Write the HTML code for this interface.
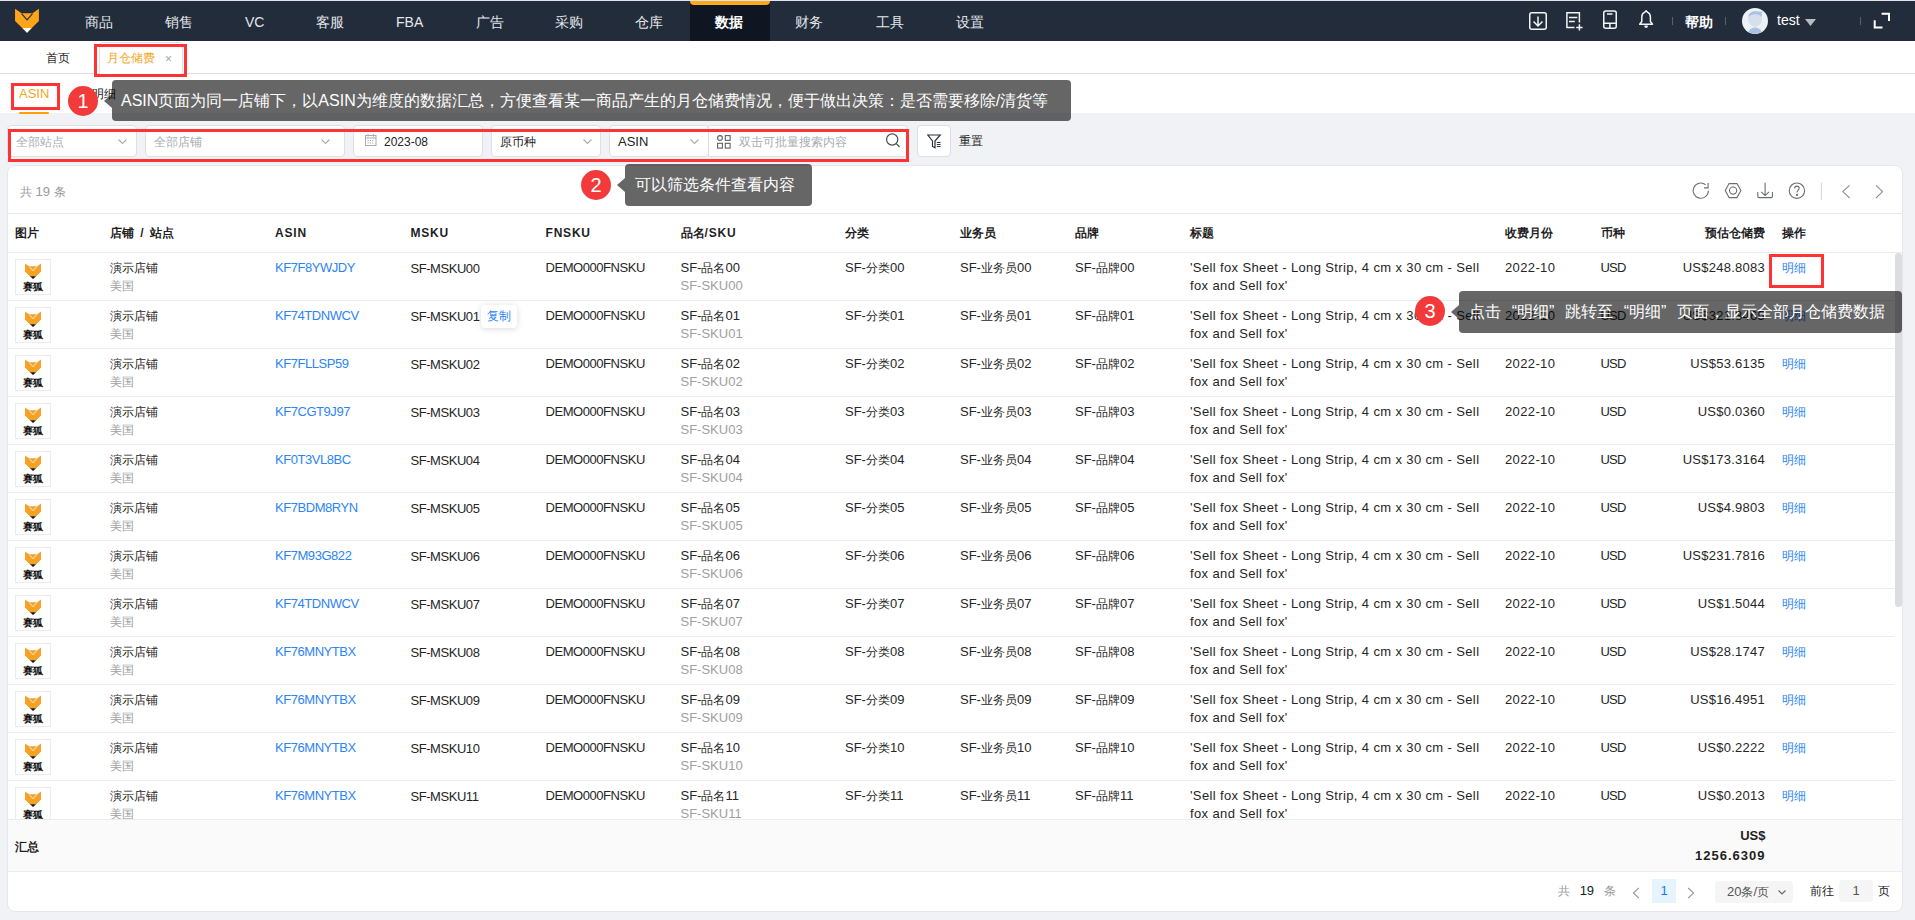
<!DOCTYPE html><html><head><meta charset="utf-8"><style>
*{box-sizing:border-box;margin:0;padding:0}
html,body{width:1915px;height:920px;overflow:hidden;background:#f1f2f6;font-family:"Liberation Sans",sans-serif;color:#1f1f1f}
i{font-style:normal}
.a{position:absolute;white-space:nowrap}
.z{font-size:12px;letter-spacing:0}
#hdr{position:absolute;left:0;top:1px;width:1915px;height:40px;background:#232c3b}
#topline{position:absolute;left:0;top:0;width:1915px;height:1px;background:#dfe3ea}
.nav{position:absolute;top:14px;font-size:14px;line-height:16px;color:#e4e7ec}
.nav .z{font-size:14px}
#act{position:absolute;left:690px;top:1px;width:80px;height:40px;background:#0f1621}
#actbar{position:absolute;left:690px;top:1px;width:80px;height:4px;background:#ffa81a;border-radius:0 0 4px 4px}
#tabs{position:absolute;left:0;top:41px;width:1915px;height:33px;background:#fff;border-bottom:1px solid #dcdfe6}
#sub{position:absolute;left:0;top:74px;width:1915px;height:39px;background:#fff}
.tip{z-index:6;position:absolute;background:rgba(0,0,0,.6);color:#fff;font-size:16px;line-height:20px;border-radius:4px;white-space:nowrap}
.tip .z{font-size:16px}
.tip:before{content:"";position:absolute;left:-8px;top:50%;margin-top:-7px;border-right:8px solid rgba(0,0,0,.6);border-top:7px solid transparent;border-bottom:7px solid transparent}
.badge{z-index:7;position:absolute;width:30px;height:30px;border-radius:50%;background:#f33a3a;color:#fff;font-size:20px;line-height:30px;text-align:center}
.rb{z-index:5;position:absolute;border:3px solid #ff3333}
.inp{position:absolute;top:125px;height:32px;background:#fff;border:1px solid #dcdfe6;border-radius:4px}
.ph{position:absolute;font-size:12px;line-height:14px;color:#a8abb2}
#card{position:absolute;left:7px;top:165px;width:1896px;height:747px;background:#fff;border:1px solid #e4e7ed;border-radius:8px;overflow:hidden}
.th{position:absolute;top:12px;font-weight:bold;font-size:12px;line-height:14px;color:#1f1f1f;letter-spacing:.8px}
.th .z{font-size:12px}
.ws{word-spacing:2px}
.row{position:absolute;left:0;width:1886px;height:48px;border-bottom:1px solid #ebeced}
.t1{position:absolute;top:6px;font-size:13px;line-height:18px;color:#262626}
.t2{position:absolute;top:24px;font-size:13px;line-height:18px;color:#a0a0a0}
.up{letter-spacing:-.45px}
.lo{letter-spacing:.37px}
.blue{color:#2d84f7}
.img{position:absolute;left:7px;top:6px;width:36px;height:36px;border:1px solid #ececec;background:#fff}
</style></head><body>
<div id="topline"></div><div id="hdr"></div><div id="act"></div><div id="actbar"></div>
<div class="a" style="left:12px;top:6px;line-height:0"><svg width="30" height="30" viewBox="12 6 30 30"><polygon points="15.05,8.83 21.5,13.35 32.6,13.35 38.9,8.83 38.9,21 27.05,32.8 15.05,21" fill="#ffa51b"/><polyline points="21.6,13.6 27.05,19.9 32.5,13.6" fill="none" stroke="#2a2f38" stroke-width="1.2"/><polygon points="22.5,28.1 31.6,28.1 27.05,32.8" fill="#fff"/></svg></div>
<div class="nav a" style="left:85px">商品</div>
<div class="nav a" style="left:164.5px">销售</div>
<div class="nav a" style="left:245px">VC</div>
<div class="nav a" style="left:316px">客服</div>
<div class="nav a" style="left:396px">FBA</div>
<div class="nav a" style="left:475.6px">广告</div>
<div class="nav a" style="left:555px">采购</div>
<div class="nav a" style="left:635px">仓库</div>
<div class="nav a" style="left:715px;color:#fff;font-weight:bold">数据</div>
<div class="nav a" style="left:795px">财务</div>
<div class="nav a" style="left:875.6px">工具</div>
<div class="nav a" style="left:955.8px">设置</div>
<svg class="a" style="left:1520px;top:4px" width="140" height="34" viewBox="1520 4 140 34" fill="none" stroke="#f2f4f7" stroke-width="1.5"><rect x="1529.75" y="12.75" width="16.5" height="16.5" rx="2"/><path d="M1538 16.5V25.5M1533.5 21.5L1538 26L1542.5 21.5"/><path d="M1574.5 27.6H1566.9V12.75H1579.4V22.5M1569 17.5H1577.3M1569 21.5H1574.8M1579.4 24.2V30.6M1576.2 27.4H1582.6"/><rect x="1603.75" y="10.9" width="12.5" height="17.3" rx="2"/><path d="M1607 13.9H1612.5M1603.75 23.3H1616.25M1609.9 23.3V28.2"/><path d="M1646.1 10.7L1644.5 12.4C1642.7 13.1 1641.8 14.9 1641.8 17.1V21.5L1639.7 24.3H1652.5L1650.4 21.5V17.1C1650.4 14.9 1649.5 13.1 1647.7 12.4Z" stroke-linejoin="round"/><path d="M1644.4 25.5H1647.8V26.6C1647.8 27.4 1647.1 27.9 1646.1 27.9C1645.1 27.9 1644.4 27.4 1644.4 26.6Z" fill="#f2f4f7" stroke="none"/></svg>
<div class="a" style="left:1672px;top:17px;width:1px;height:8px;background:#5a6270"></div>
<div class="a" style="left:1725px;top:17px;width:1px;height:8px;background:#5a6270"></div>
<div class="a" style="left:1860px;top:17px;width:1px;height:8px;background:#5a6270"></div>
<svg class="a" style="left:1742px;top:8px" width="26" height="26" viewBox="0 0 26 26"><circle cx="13" cy="13" r="13" fill="#eef1f6"/><ellipse cx="13" cy="11" rx="7" ry="7.5" fill="#d6dfeb"/><path d="M6 9C7 4.5 10 3.2 13.5 3.2C16 3.2 18.3 3.8 21 3.6L19.5 5.2C20 6.5 20.2 8 20 9C18 6.8 15 6.2 12 6.4C9.5 6.6 7.5 7.5 6 9Z" fill="#a9c3e4"/><path d="M6.5 23.5C8 20.5 10.3 19.5 13 19.5C15.7 19.5 18 20.5 19.5 23.5C17.8 25 15.5 25.8 13 25.8C10.5 25.8 8.2 25 6.5 23.5Z" fill="#a9c1e2"/><rect x="11.5" y="17" width="3" height="3" fill="#d6dfeb"/></svg>
<svg class="a" style="left:1805px;top:19px" width="11" height="7" viewBox="0 0 11 7"><path d="M0 0H11L5.5 7Z" fill="#b8bcc4"/></svg>
<svg class="a" style="left:1872px;top:12px" width="20" height="18" viewBox="1872 12 20 18" fill="none" stroke="#fff" stroke-width="2"><path d="M1881.6 13.8H1889V21.1M1874.7 20.3V27.6H1882.5"/></svg>
<div class="nav a" style="left:1685px;color:#fff;font-weight:bold">帮助</div>
<div class="nav a" style="left:1777px;top:12px;color:#fff">test</div>
<div id="tabs"></div>
<div class="a" style="left:46px;top:51px;font-size:12px;line-height:14px;color:#222">首页</div>
<div class="a" style="left:99px;top:42px;width:84px;height:32px;border:1px solid #dcdfe6;border-bottom:none;border-radius:4px 4px 0 0;background:#fff"></div>
<div class="a" style="left:107px;top:51px;font-size:12px;line-height:14px;color:#f5a623">月仓储费</div>
<div class="a" style="left:165px;top:52px;font-size:12px;line-height:14px;color:#9aa">×</div>
<div class="rb" style="left:94px;top:44px;width:93px;height:33px"></div>
<div id="sub"></div>
<div class="a" style="left:19px;top:87px;font-size:13px;line-height:14px;color:#f5a623">ASIN</div>
<div class="a" style="left:19px;top:112px;width:30px;height:2px;background:#ffa000;border-radius:1px"></div>
<div class="a" style="left:92px;top:87px;font-size:12px;line-height:14px;color:#222">明细</div>
<div class="rb" style="left:11px;top:83px;width:49px;height:27px"></div>
<div class="tip" style="left:112px;top:80px;width:959px;height:41px;padding:11px 0 0 9px">ASIN<i class="z">页面为同一店铺下，以</i>ASIN<i class="z">为维度的数据汇总，方便查看某一商品产生的月仓储费情况，便于做出决策：是否需要移除</i>/<i class="z">清货等</i></div>
<div class="badge" style="left:68px;top:86px">1</div>
<div class="inp" style="left:7px;width:130px"></div>
<div class="inp" style="left:145px;width:200px"></div>
<div class="inp" style="left:353px;width:130px"></div>
<div class="inp" style="left:491px;width:110px"></div>
<div class="inp" style="left:609px;width:100px"></div>
<div class="ph a" style="left:16px;top:135px">全部站点</div>
<div class="ph a" style="left:154px;top:135px">全部店铺</div>
<div class="a" style="left:384px;top:135px;font-size:12px;line-height:14px;color:#222">2023-08</div>
<div class="a" style="left:500px;top:135px;font-size:12px;line-height:14px;color:#222">原币种</div>
<div class="a" style="left:618px;top:135px;font-size:13px;line-height:14px;color:#222">ASIN</div>
<div class="inp" style="left:708px;width:200px;border-radius:0 4px 4px 0"></div>
<div class="ph a" style="left:739px;top:135px">双击可批量搜索内容</div>
<div class="inp" style="left:917px;width:34px"></div>
<div class="a" style="left:959px;top:134px;font-size:12px;line-height:14px;color:#222">重置</div>
<svg class="a" style="left:117.5px;top:138.5px" width="9" height="6" viewBox="0 0 9 6"><path d="M0.5 0.5L4.5 4.5L8.5 0.5" fill="none" stroke="#a8abb2" stroke-width="1.1"/></svg>
<svg class="a" style="left:321px;top:138.5px" width="9" height="6" viewBox="0 0 9 6"><path d="M0.5 0.5L4.5 4.5L8.5 0.5" fill="none" stroke="#a8abb2" stroke-width="1.1"/></svg>
<svg class="a" style="left:582.5px;top:138.5px" width="9" height="6" viewBox="0 0 9 6"><path d="M0.5 0.5L4.5 4.5L8.5 0.5" fill="none" stroke="#a8abb2" stroke-width="1.1"/></svg>
<svg class="a" style="left:689.5px;top:138.5px" width="9" height="6" viewBox="0 0 9 6"><path d="M0.5 0.5L4.5 4.5L8.5 0.5" fill="none" stroke="#a8abb2" stroke-width="1.1"/></svg>
<svg class="a" style="left:365px;top:134px" width="12" height="12" viewBox="0 0 12 12" fill="none" stroke="#a8abb2" stroke-width="1"><rect x="0.5" y="1.5" width="10.5" height="10" /><path d="M0.5 4H11M3 0V2.5M8.5 0V2.5" /><path d="M2.5 6.5H9M2.5 9H9" stroke-dasharray="1.2 1.1"/></svg>
<svg class="a" style="left:717px;top:134.5px" width="14" height="14" viewBox="0 0 14 14" fill="none" stroke="#5c5f66" stroke-width="1.1"><circle cx="3" cy="3" r="2.4"/><rect x="8.3" y="0.6" width="4.8" height="4.8"/><rect x="0.6" y="8.3" width="4.8" height="4.8"/><rect x="8.3" y="8.3" width="4.8" height="4.8"/></svg>
<svg class="a" style="left:885px;top:133px" width="16" height="15" viewBox="0 0 16 15" fill="none" stroke="#4a4d55" stroke-width="1.2"><circle cx="7.2" cy="6.5" r="5.6"/><path d="M11.3 10.6L14.6 14"/></svg>
<svg class="a" style="left:927px;top:133.5px" width="15" height="15" viewBox="0 0 15 15" fill="none" stroke="#303339" stroke-width="1.2"><path d="M0.8 1H13.2L8 7V13.8L5.5 12.5V7Z"/><path d="M9.8 8.5H13.5M9.8 10.5H13.5M9.8 12.5H13.5" stroke-width="1"/></svg>
<div class="rb" style="left:8px;top:129px;width:901px;height:33px"></div>
<div id="card">
<div class="a" style="left:0;top:0;width:1896px;height:48px;border-bottom:1px solid #e4e7ed"></div>
<div class="a" style="left:12px;top:19px;font-size:13px;line-height:14px;color:#999"><i class="z">共</i> 19 <i class="z">条</i></div>
<svg class="a" style="left:1675px;top:9px" width="220" height="30" viewBox="1683 175 220 30" fill="none" stroke="#6b6e75" stroke-width="1.1"><path d="M1708.4 190.7A7.6 7.6 0 1 1 1705.6 184.8"/><path d="M1704 187.9H1708.1V183.1"/><path d="M1729.1 183.6H1737L1740.9 190.6L1737 197.6H1729.1L1725.2 190.6Z"/><circle cx="1733.1" cy="190.6" r="3.6"/><path d="M1757.8 192V196.6Q1757.8 197.6 1758.8 197.6H1771.4Q1772.4 197.6 1772.4 196.6V192M1765.1 182.8V195.4M1761.2 191.8L1765.1 195.6L1769 191.8"/><circle cx="1796.9" cy="190.7" r="7.7"/><path d="M1794.6 188.4C1794.6 186.9 1795.6 186.1 1796.9 186.1C1798.2 186.1 1799.2 187 1799.2 188.3C1799.2 190.1 1797 190.3 1797 192.6"/><circle cx="1797" cy="194.9" r=".5" fill="#6b6e75"/><path d="M1821.5 182.5V199.7" stroke="#d9d9d9"/><path d="M1849.6 185.3L1842.8 191.6L1849.6 198M1876 185.3L1882.6 191.6L1876 198" stroke="#8c8f96"/></svg>
<div class="a" style="left:0;top:48px;width:1896px;height:39px;border-bottom:1px solid #ebeced">
<div class="th a ws" style="left:7px"><i class="z">图片</i></div>
<div class="th a ws" style="left:102px"><i class="z">店铺</i> / <i class="z">站点</i></div>
<div class="th a ws" style="left:267px">ASIN</div>
<div class="th a ws" style="left:402.5px">MSKU</div>
<div class="th a ws" style="left:537.5px">FNSKU</div>
<div class="th a ws" style="left:672.5px"><i class="z">品名</i>/SKU</div>
<div class="th a ws" style="left:837px"><i class="z">分类</i></div>
<div class="th a ws" style="left:952px"><i class="z">业务员</i></div>
<div class="th a ws" style="left:1067px"><i class="z">品牌</i></div>
<div class="th a ws" style="left:1182px"><i class="z">标题</i></div>
<div class="th a ws" style="left:1497px"><i class="z">收费月份</i></div>
<div class="th a ws" style="left:1592.5px"><i class="z">币种</i></div>
<div class="th a ws" style="left:1697px"><i class="z">预估仓储费</i></div>
<div class="th a ws" style="left:1774px"><i class="z">操作</i></div>
</div>
<div class="a" style="left:0;top:87px;width:1896px;height:566px;overflow:hidden">
<div class="row" style="top:0px">
<div class="img"><svg class="a" style="left:0;top:0" width="34" height="34" viewBox="16 260 34 34"><polygon points="25,263.5 29,266.25 37.25,266.25 41,263.5 41,271.5 36,276.5 30,276.5 25,271.5" fill="#f3a127"/><polyline points="29.3,266.6 33,270.7 36.9,266.6" fill="none" stroke="#fff" stroke-width=".8"/><polygon points="30,276.3 36,276.3 33,279" fill="#111"/></svg><div class="a" style="left:7px;top:21px;font-size:10px;line-height:11px;font-weight:bold;color:#111;letter-spacing:-0.3px">赛狐</div></div>
<div class="t1 a" style="left:102px"><i class="z">演示店铺</i></div><div class="t2 a" style="left:102px"><i class="z">美国</i></div>
<div class="t1 a blue up" style="left:267px">KF7F8YWJDY</div>
<div class="t1 a up" style="left:402.5px;top:7px">SF-MSKU00</div>
<div class="t1 a up" style="left:537.5px">DEMO000FNSKU</div>
<div class="t1 a" style="left:672.5px">SF-<i class="z">品名</i>00</div><div class="t2 a" style="left:672.5px">SF-SKU00</div>
<div class="t1 a" style="left:837px">SF-<i class="z">分类</i>00</div>
<div class="t1 a" style="left:952px">SF-<i class="z">业务员</i>00</div>
<div class="t1 a" style="left:1067px">SF-<i class="z">品牌</i>00</div>
<div class="t1 a lo" style="left:1182px">'Sell fox Sheet - Long Strip, 4 cm x 30 cm - Sell</div><div class="t2 a lo" style="left:1182px;color:#262626">fox and Sell fox'</div>
<div class="t1 a lo" style="left:1497px">2022-10</div>
<div class="t1 a" style="left:1592.5px;letter-spacing:-.8px">USD</div>
<div class="t1 a" style="right:129px;text-align:right;letter-spacing:.25px">US$248.8083</div>
<div class="t1 a blue" style="left:1774px"><i class="z">明细</i></div>
</div>
<div class="row" style="top:48px">
<div class="img"><svg class="a" style="left:0;top:0" width="34" height="34" viewBox="16 260 34 34"><polygon points="25,263.5 29,266.25 37.25,266.25 41,263.5 41,271.5 36,276.5 30,276.5 25,271.5" fill="#f3a127"/><polyline points="29.3,266.6 33,270.7 36.9,266.6" fill="none" stroke="#fff" stroke-width=".8"/><polygon points="30,276.3 36,276.3 33,279" fill="#111"/></svg><div class="a" style="left:7px;top:21px;font-size:10px;line-height:11px;font-weight:bold;color:#111;letter-spacing:-0.3px">赛狐</div></div>
<div class="t1 a" style="left:102px"><i class="z">演示店铺</i></div><div class="t2 a" style="left:102px"><i class="z">美国</i></div>
<div class="t1 a blue up" style="left:267px">KF74TDNWCV</div>
<div class="t1 a up" style="left:402.5px;top:7px">SF-MSKU01</div>
<div class="a" style="left:473px;top:4px;width:36px;height:23px;background:#fff;border-radius:4px;box-shadow:0 1px 6px rgba(0,0,0,.15);color:#2d84f7;font-size:12px;line-height:23px;text-align:center">复制</div>
<div class="t1 a up" style="left:537.5px">DEMO000FNSKU</div>
<div class="t1 a" style="left:672.5px">SF-<i class="z">品名</i>01</div><div class="t2 a" style="left:672.5px">SF-SKU01</div>
<div class="t1 a" style="left:837px">SF-<i class="z">分类</i>01</div>
<div class="t1 a" style="left:952px">SF-<i class="z">业务员</i>01</div>
<div class="t1 a" style="left:1067px">SF-<i class="z">品牌</i>01</div>
<div class="t1 a lo" style="left:1182px">'Sell fox Sheet - Long Strip, 4 cm x 30 cm - Sell</div><div class="t2 a lo" style="left:1182px;color:#262626">fox and Sell fox'</div>
<div class="t1 a lo" style="left:1497px">2022-10</div>
<div class="t1 a" style="left:1592.5px;letter-spacing:-.8px">USD</div>
<div class="t1 a" style="right:129px;text-align:right;letter-spacing:.25px">US$321.3465</div>
<div class="t1 a blue" style="left:1774px"><i class="z">明细</i></div>
</div>
<div class="row" style="top:96px">
<div class="img"><svg class="a" style="left:0;top:0" width="34" height="34" viewBox="16 260 34 34"><polygon points="25,263.5 29,266.25 37.25,266.25 41,263.5 41,271.5 36,276.5 30,276.5 25,271.5" fill="#f3a127"/><polyline points="29.3,266.6 33,270.7 36.9,266.6" fill="none" stroke="#fff" stroke-width=".8"/><polygon points="30,276.3 36,276.3 33,279" fill="#111"/></svg><div class="a" style="left:7px;top:21px;font-size:10px;line-height:11px;font-weight:bold;color:#111;letter-spacing:-0.3px">赛狐</div></div>
<div class="t1 a" style="left:102px"><i class="z">演示店铺</i></div><div class="t2 a" style="left:102px"><i class="z">美国</i></div>
<div class="t1 a blue up" style="left:267px">KF7FLLSP59</div>
<div class="t1 a up" style="left:402.5px;top:7px">SF-MSKU02</div>
<div class="t1 a up" style="left:537.5px">DEMO000FNSKU</div>
<div class="t1 a" style="left:672.5px">SF-<i class="z">品名</i>02</div><div class="t2 a" style="left:672.5px">SF-SKU02</div>
<div class="t1 a" style="left:837px">SF-<i class="z">分类</i>02</div>
<div class="t1 a" style="left:952px">SF-<i class="z">业务员</i>02</div>
<div class="t1 a" style="left:1067px">SF-<i class="z">品牌</i>02</div>
<div class="t1 a lo" style="left:1182px">'Sell fox Sheet - Long Strip, 4 cm x 30 cm - Sell</div><div class="t2 a lo" style="left:1182px;color:#262626">fox and Sell fox'</div>
<div class="t1 a lo" style="left:1497px">2022-10</div>
<div class="t1 a" style="left:1592.5px;letter-spacing:-.8px">USD</div>
<div class="t1 a" style="right:129px;text-align:right;letter-spacing:.25px">US$53.6135</div>
<div class="t1 a blue" style="left:1774px"><i class="z">明细</i></div>
</div>
<div class="row" style="top:144px">
<div class="img"><svg class="a" style="left:0;top:0" width="34" height="34" viewBox="16 260 34 34"><polygon points="25,263.5 29,266.25 37.25,266.25 41,263.5 41,271.5 36,276.5 30,276.5 25,271.5" fill="#f3a127"/><polyline points="29.3,266.6 33,270.7 36.9,266.6" fill="none" stroke="#fff" stroke-width=".8"/><polygon points="30,276.3 36,276.3 33,279" fill="#111"/></svg><div class="a" style="left:7px;top:21px;font-size:10px;line-height:11px;font-weight:bold;color:#111;letter-spacing:-0.3px">赛狐</div></div>
<div class="t1 a" style="left:102px"><i class="z">演示店铺</i></div><div class="t2 a" style="left:102px"><i class="z">美国</i></div>
<div class="t1 a blue up" style="left:267px">KF7CGT9J97</div>
<div class="t1 a up" style="left:402.5px;top:7px">SF-MSKU03</div>
<div class="t1 a up" style="left:537.5px">DEMO000FNSKU</div>
<div class="t1 a" style="left:672.5px">SF-<i class="z">品名</i>03</div><div class="t2 a" style="left:672.5px">SF-SKU03</div>
<div class="t1 a" style="left:837px">SF-<i class="z">分类</i>03</div>
<div class="t1 a" style="left:952px">SF-<i class="z">业务员</i>03</div>
<div class="t1 a" style="left:1067px">SF-<i class="z">品牌</i>03</div>
<div class="t1 a lo" style="left:1182px">'Sell fox Sheet - Long Strip, 4 cm x 30 cm - Sell</div><div class="t2 a lo" style="left:1182px;color:#262626">fox and Sell fox'</div>
<div class="t1 a lo" style="left:1497px">2022-10</div>
<div class="t1 a" style="left:1592.5px;letter-spacing:-.8px">USD</div>
<div class="t1 a" style="right:129px;text-align:right;letter-spacing:.25px">US$0.0360</div>
<div class="t1 a blue" style="left:1774px"><i class="z">明细</i></div>
</div>
<div class="row" style="top:192px">
<div class="img"><svg class="a" style="left:0;top:0" width="34" height="34" viewBox="16 260 34 34"><polygon points="25,263.5 29,266.25 37.25,266.25 41,263.5 41,271.5 36,276.5 30,276.5 25,271.5" fill="#f3a127"/><polyline points="29.3,266.6 33,270.7 36.9,266.6" fill="none" stroke="#fff" stroke-width=".8"/><polygon points="30,276.3 36,276.3 33,279" fill="#111"/></svg><div class="a" style="left:7px;top:21px;font-size:10px;line-height:11px;font-weight:bold;color:#111;letter-spacing:-0.3px">赛狐</div></div>
<div class="t1 a" style="left:102px"><i class="z">演示店铺</i></div><div class="t2 a" style="left:102px"><i class="z">美国</i></div>
<div class="t1 a blue up" style="left:267px">KF0T3VL8BC</div>
<div class="t1 a up" style="left:402.5px;top:7px">SF-MSKU04</div>
<div class="t1 a up" style="left:537.5px">DEMO000FNSKU</div>
<div class="t1 a" style="left:672.5px">SF-<i class="z">品名</i>04</div><div class="t2 a" style="left:672.5px">SF-SKU04</div>
<div class="t1 a" style="left:837px">SF-<i class="z">分类</i>04</div>
<div class="t1 a" style="left:952px">SF-<i class="z">业务员</i>04</div>
<div class="t1 a" style="left:1067px">SF-<i class="z">品牌</i>04</div>
<div class="t1 a lo" style="left:1182px">'Sell fox Sheet - Long Strip, 4 cm x 30 cm - Sell</div><div class="t2 a lo" style="left:1182px;color:#262626">fox and Sell fox'</div>
<div class="t1 a lo" style="left:1497px">2022-10</div>
<div class="t1 a" style="left:1592.5px;letter-spacing:-.8px">USD</div>
<div class="t1 a" style="right:129px;text-align:right;letter-spacing:.25px">US$173.3164</div>
<div class="t1 a blue" style="left:1774px"><i class="z">明细</i></div>
</div>
<div class="row" style="top:240px">
<div class="img"><svg class="a" style="left:0;top:0" width="34" height="34" viewBox="16 260 34 34"><polygon points="25,263.5 29,266.25 37.25,266.25 41,263.5 41,271.5 36,276.5 30,276.5 25,271.5" fill="#f3a127"/><polyline points="29.3,266.6 33,270.7 36.9,266.6" fill="none" stroke="#fff" stroke-width=".8"/><polygon points="30,276.3 36,276.3 33,279" fill="#111"/></svg><div class="a" style="left:7px;top:21px;font-size:10px;line-height:11px;font-weight:bold;color:#111;letter-spacing:-0.3px">赛狐</div></div>
<div class="t1 a" style="left:102px"><i class="z">演示店铺</i></div><div class="t2 a" style="left:102px"><i class="z">美国</i></div>
<div class="t1 a blue up" style="left:267px">KF7BDM8RYN</div>
<div class="t1 a up" style="left:402.5px;top:7px">SF-MSKU05</div>
<div class="t1 a up" style="left:537.5px">DEMO000FNSKU</div>
<div class="t1 a" style="left:672.5px">SF-<i class="z">品名</i>05</div><div class="t2 a" style="left:672.5px">SF-SKU05</div>
<div class="t1 a" style="left:837px">SF-<i class="z">分类</i>05</div>
<div class="t1 a" style="left:952px">SF-<i class="z">业务员</i>05</div>
<div class="t1 a" style="left:1067px">SF-<i class="z">品牌</i>05</div>
<div class="t1 a lo" style="left:1182px">'Sell fox Sheet - Long Strip, 4 cm x 30 cm - Sell</div><div class="t2 a lo" style="left:1182px;color:#262626">fox and Sell fox'</div>
<div class="t1 a lo" style="left:1497px">2022-10</div>
<div class="t1 a" style="left:1592.5px;letter-spacing:-.8px">USD</div>
<div class="t1 a" style="right:129px;text-align:right;letter-spacing:.25px">US$4.9803</div>
<div class="t1 a blue" style="left:1774px"><i class="z">明细</i></div>
</div>
<div class="row" style="top:288px">
<div class="img"><svg class="a" style="left:0;top:0" width="34" height="34" viewBox="16 260 34 34"><polygon points="25,263.5 29,266.25 37.25,266.25 41,263.5 41,271.5 36,276.5 30,276.5 25,271.5" fill="#f3a127"/><polyline points="29.3,266.6 33,270.7 36.9,266.6" fill="none" stroke="#fff" stroke-width=".8"/><polygon points="30,276.3 36,276.3 33,279" fill="#111"/></svg><div class="a" style="left:7px;top:21px;font-size:10px;line-height:11px;font-weight:bold;color:#111;letter-spacing:-0.3px">赛狐</div></div>
<div class="t1 a" style="left:102px"><i class="z">演示店铺</i></div><div class="t2 a" style="left:102px"><i class="z">美国</i></div>
<div class="t1 a blue up" style="left:267px">KF7M93G822</div>
<div class="t1 a up" style="left:402.5px;top:7px">SF-MSKU06</div>
<div class="t1 a up" style="left:537.5px">DEMO000FNSKU</div>
<div class="t1 a" style="left:672.5px">SF-<i class="z">品名</i>06</div><div class="t2 a" style="left:672.5px">SF-SKU06</div>
<div class="t1 a" style="left:837px">SF-<i class="z">分类</i>06</div>
<div class="t1 a" style="left:952px">SF-<i class="z">业务员</i>06</div>
<div class="t1 a" style="left:1067px">SF-<i class="z">品牌</i>06</div>
<div class="t1 a lo" style="left:1182px">'Sell fox Sheet - Long Strip, 4 cm x 30 cm - Sell</div><div class="t2 a lo" style="left:1182px;color:#262626">fox and Sell fox'</div>
<div class="t1 a lo" style="left:1497px">2022-10</div>
<div class="t1 a" style="left:1592.5px;letter-spacing:-.8px">USD</div>
<div class="t1 a" style="right:129px;text-align:right;letter-spacing:.25px">US$231.7816</div>
<div class="t1 a blue" style="left:1774px"><i class="z">明细</i></div>
</div>
<div class="row" style="top:336px">
<div class="img"><svg class="a" style="left:0;top:0" width="34" height="34" viewBox="16 260 34 34"><polygon points="25,263.5 29,266.25 37.25,266.25 41,263.5 41,271.5 36,276.5 30,276.5 25,271.5" fill="#f3a127"/><polyline points="29.3,266.6 33,270.7 36.9,266.6" fill="none" stroke="#fff" stroke-width=".8"/><polygon points="30,276.3 36,276.3 33,279" fill="#111"/></svg><div class="a" style="left:7px;top:21px;font-size:10px;line-height:11px;font-weight:bold;color:#111;letter-spacing:-0.3px">赛狐</div></div>
<div class="t1 a" style="left:102px"><i class="z">演示店铺</i></div><div class="t2 a" style="left:102px"><i class="z">美国</i></div>
<div class="t1 a blue up" style="left:267px">KF74TDNWCV</div>
<div class="t1 a up" style="left:402.5px;top:7px">SF-MSKU07</div>
<div class="t1 a up" style="left:537.5px">DEMO000FNSKU</div>
<div class="t1 a" style="left:672.5px">SF-<i class="z">品名</i>07</div><div class="t2 a" style="left:672.5px">SF-SKU07</div>
<div class="t1 a" style="left:837px">SF-<i class="z">分类</i>07</div>
<div class="t1 a" style="left:952px">SF-<i class="z">业务员</i>07</div>
<div class="t1 a" style="left:1067px">SF-<i class="z">品牌</i>07</div>
<div class="t1 a lo" style="left:1182px">'Sell fox Sheet - Long Strip, 4 cm x 30 cm - Sell</div><div class="t2 a lo" style="left:1182px;color:#262626">fox and Sell fox'</div>
<div class="t1 a lo" style="left:1497px">2022-10</div>
<div class="t1 a" style="left:1592.5px;letter-spacing:-.8px">USD</div>
<div class="t1 a" style="right:129px;text-align:right;letter-spacing:.25px">US$1.5044</div>
<div class="t1 a blue" style="left:1774px"><i class="z">明细</i></div>
</div>
<div class="row" style="top:384px">
<div class="img"><svg class="a" style="left:0;top:0" width="34" height="34" viewBox="16 260 34 34"><polygon points="25,263.5 29,266.25 37.25,266.25 41,263.5 41,271.5 36,276.5 30,276.5 25,271.5" fill="#f3a127"/><polyline points="29.3,266.6 33,270.7 36.9,266.6" fill="none" stroke="#fff" stroke-width=".8"/><polygon points="30,276.3 36,276.3 33,279" fill="#111"/></svg><div class="a" style="left:7px;top:21px;font-size:10px;line-height:11px;font-weight:bold;color:#111;letter-spacing:-0.3px">赛狐</div></div>
<div class="t1 a" style="left:102px"><i class="z">演示店铺</i></div><div class="t2 a" style="left:102px"><i class="z">美国</i></div>
<div class="t1 a blue up" style="left:267px">KF76MNYTBX</div>
<div class="t1 a up" style="left:402.5px;top:7px">SF-MSKU08</div>
<div class="t1 a up" style="left:537.5px">DEMO000FNSKU</div>
<div class="t1 a" style="left:672.5px">SF-<i class="z">品名</i>08</div><div class="t2 a" style="left:672.5px">SF-SKU08</div>
<div class="t1 a" style="left:837px">SF-<i class="z">分类</i>08</div>
<div class="t1 a" style="left:952px">SF-<i class="z">业务员</i>08</div>
<div class="t1 a" style="left:1067px">SF-<i class="z">品牌</i>08</div>
<div class="t1 a lo" style="left:1182px">'Sell fox Sheet - Long Strip, 4 cm x 30 cm - Sell</div><div class="t2 a lo" style="left:1182px;color:#262626">fox and Sell fox'</div>
<div class="t1 a lo" style="left:1497px">2022-10</div>
<div class="t1 a" style="left:1592.5px;letter-spacing:-.8px">USD</div>
<div class="t1 a" style="right:129px;text-align:right;letter-spacing:.25px">US$28.1747</div>
<div class="t1 a blue" style="left:1774px"><i class="z">明细</i></div>
</div>
<div class="row" style="top:432px">
<div class="img"><svg class="a" style="left:0;top:0" width="34" height="34" viewBox="16 260 34 34"><polygon points="25,263.5 29,266.25 37.25,266.25 41,263.5 41,271.5 36,276.5 30,276.5 25,271.5" fill="#f3a127"/><polyline points="29.3,266.6 33,270.7 36.9,266.6" fill="none" stroke="#fff" stroke-width=".8"/><polygon points="30,276.3 36,276.3 33,279" fill="#111"/></svg><div class="a" style="left:7px;top:21px;font-size:10px;line-height:11px;font-weight:bold;color:#111;letter-spacing:-0.3px">赛狐</div></div>
<div class="t1 a" style="left:102px"><i class="z">演示店铺</i></div><div class="t2 a" style="left:102px"><i class="z">美国</i></div>
<div class="t1 a blue up" style="left:267px">KF76MNYTBX</div>
<div class="t1 a up" style="left:402.5px;top:7px">SF-MSKU09</div>
<div class="t1 a up" style="left:537.5px">DEMO000FNSKU</div>
<div class="t1 a" style="left:672.5px">SF-<i class="z">品名</i>09</div><div class="t2 a" style="left:672.5px">SF-SKU09</div>
<div class="t1 a" style="left:837px">SF-<i class="z">分类</i>09</div>
<div class="t1 a" style="left:952px">SF-<i class="z">业务员</i>09</div>
<div class="t1 a" style="left:1067px">SF-<i class="z">品牌</i>09</div>
<div class="t1 a lo" style="left:1182px">'Sell fox Sheet - Long Strip, 4 cm x 30 cm - Sell</div><div class="t2 a lo" style="left:1182px;color:#262626">fox and Sell fox'</div>
<div class="t1 a lo" style="left:1497px">2022-10</div>
<div class="t1 a" style="left:1592.5px;letter-spacing:-.8px">USD</div>
<div class="t1 a" style="right:129px;text-align:right;letter-spacing:.25px">US$16.4951</div>
<div class="t1 a blue" style="left:1774px"><i class="z">明细</i></div>
</div>
<div class="row" style="top:480px">
<div class="img"><svg class="a" style="left:0;top:0" width="34" height="34" viewBox="16 260 34 34"><polygon points="25,263.5 29,266.25 37.25,266.25 41,263.5 41,271.5 36,276.5 30,276.5 25,271.5" fill="#f3a127"/><polyline points="29.3,266.6 33,270.7 36.9,266.6" fill="none" stroke="#fff" stroke-width=".8"/><polygon points="30,276.3 36,276.3 33,279" fill="#111"/></svg><div class="a" style="left:7px;top:21px;font-size:10px;line-height:11px;font-weight:bold;color:#111;letter-spacing:-0.3px">赛狐</div></div>
<div class="t1 a" style="left:102px"><i class="z">演示店铺</i></div><div class="t2 a" style="left:102px"><i class="z">美国</i></div>
<div class="t1 a blue up" style="left:267px">KF76MNYTBX</div>
<div class="t1 a up" style="left:402.5px;top:7px">SF-MSKU10</div>
<div class="t1 a up" style="left:537.5px">DEMO000FNSKU</div>
<div class="t1 a" style="left:672.5px">SF-<i class="z">品名</i>10</div><div class="t2 a" style="left:672.5px">SF-SKU10</div>
<div class="t1 a" style="left:837px">SF-<i class="z">分类</i>10</div>
<div class="t1 a" style="left:952px">SF-<i class="z">业务员</i>10</div>
<div class="t1 a" style="left:1067px">SF-<i class="z">品牌</i>10</div>
<div class="t1 a lo" style="left:1182px">'Sell fox Sheet - Long Strip, 4 cm x 30 cm - Sell</div><div class="t2 a lo" style="left:1182px;color:#262626">fox and Sell fox'</div>
<div class="t1 a lo" style="left:1497px">2022-10</div>
<div class="t1 a" style="left:1592.5px;letter-spacing:-.8px">USD</div>
<div class="t1 a" style="right:129px;text-align:right;letter-spacing:.25px">US$0.2222</div>
<div class="t1 a blue" style="left:1774px"><i class="z">明细</i></div>
</div>
<div class="row" style="top:528px">
<div class="img"><svg class="a" style="left:0;top:0" width="34" height="34" viewBox="16 260 34 34"><polygon points="25,263.5 29,266.25 37.25,266.25 41,263.5 41,271.5 36,276.5 30,276.5 25,271.5" fill="#f3a127"/><polyline points="29.3,266.6 33,270.7 36.9,266.6" fill="none" stroke="#fff" stroke-width=".8"/><polygon points="30,276.3 36,276.3 33,279" fill="#111"/></svg><div class="a" style="left:7px;top:21px;font-size:10px;line-height:11px;font-weight:bold;color:#111;letter-spacing:-0.3px">赛狐</div></div>
<div class="t1 a" style="left:102px"><i class="z">演示店铺</i></div><div class="t2 a" style="left:102px"><i class="z">美国</i></div>
<div class="t1 a blue up" style="left:267px">KF76MNYTBX</div>
<div class="t1 a up" style="left:402.5px;top:7px">SF-MSKU11</div>
<div class="t1 a up" style="left:537.5px">DEMO000FNSKU</div>
<div class="t1 a" style="left:672.5px">SF-<i class="z">品名</i>11</div><div class="t2 a" style="left:672.5px">SF-SKU11</div>
<div class="t1 a" style="left:837px">SF-<i class="z">分类</i>11</div>
<div class="t1 a" style="left:952px">SF-<i class="z">业务员</i>11</div>
<div class="t1 a" style="left:1067px">SF-<i class="z">品牌</i>11</div>
<div class="t1 a lo" style="left:1182px">'Sell fox Sheet - Long Strip, 4 cm x 30 cm - Sell</div><div class="t2 a lo" style="left:1182px;color:#262626">fox and Sell fox'</div>
<div class="t1 a lo" style="left:1497px">2022-10</div>
<div class="t1 a" style="left:1592.5px;letter-spacing:-.8px">USD</div>
<div class="t1 a" style="right:129px;text-align:right;letter-spacing:.25px">US$0.2013</div>
<div class="t1 a blue" style="left:1774px"><i class="z">明细</i></div>
</div>
</div>
<div class="a" style="left:0;top:653px;width:1896px;height:53px;background:#fafafa;border-top:1px solid #ebeced;border-bottom:1px solid #ebeced"></div>
<div class="th a" style="left:7px;top:674px"><i class="z">汇总</i></div>
<div class="th a" style="right:136.5px;top:660px;text-align:right;line-height:20px;font-size:13px;letter-spacing:0">US$<br><i style="letter-spacing:1px">1256.6309</i></div>
<div class="a" style="left:1550px;top:718px;font-size:13px;line-height:14px;color:#999;word-spacing:6px"><i class="z">共</i> <i style="color:#222">19</i> <i class="z">条</i></div>
<svg class="a" style="left:1624px;top:719px" width="80" height="16" viewBox="0 0 80 16" fill="none" stroke="#999" stroke-width="1.1"><path d="M6.8 3L1.4 8L6.8 13"/><path d="M56.2 3L61.6 8L56.2 13"/></svg>
<div class="a" style="left:1644px;top:713px;width:24px;height:24px;background:#e6f4ff;color:#1677ff;font-size:13px;line-height:24px;text-align:center">1</div>
<div class="a" style="left:1707px;top:715px;width:78px;height:22px;background:#f5f5f5;border-radius:4px;color:#555;font-size:13px;line-height:22px;padding-left:12px">20<i class="z">条</i>/<i class="z">页</i></div>
<svg class="a" style="left:1770px;top:724px" width="8" height="5" viewBox="0 0 8 5"><path d="M0.5 0.5L4 4L7.5 0.5" fill="none" stroke="#666" stroke-width="1.1"/></svg>
<div class="a" style="left:1802px;top:718px;font-size:12px;line-height:14px;color:#222">前往</div>
<div class="a" style="left:1831px;top:714px;width:34px;height:22px;background:#f5f5f5;border-radius:4px;color:#555;font-size:13px;line-height:22px;text-align:center">1</div>
<div class="a" style="left:1870px;top:718px;font-size:12px;line-height:14px;color:#222">页</div>
<div class="a" style="left:1887px;top:87px;width:7px;height:354px;background:#dcdde1;border-radius:4px"></div>
</div>
<div class="badge" style="left:581px;top:170px">2</div>
<div class="tip" style="left:625px;top:164px;width:187px;height:42px;padding:11px 0 0 10px"><i class="z">可以筛选条件查看内容</i></div>
<div class="rb" style="left:1769px;top:254px;width:55px;height:34px"></div>
<div class="badge" style="left:1415px;top:296px">3</div>
<div class="tip" style="left:1459px;top:291px;width:443px;height:42px;padding:11px 0 0 10px"><i class="z">点击</i><i style="letter-spacing:0;display:inline-block;width:16px;text-align:right">“</i><i class="z">明细</i><i style="letter-spacing:0;display:inline-block;width:16px;text-align:left">”</i><i class="z">跳转至</i><i style="letter-spacing:0;display:inline-block;width:16px;text-align:right">“</i><i class="z">明细</i><i style="letter-spacing:0;display:inline-block;width:16px;text-align:left">”</i><i class="z">页面，显示全部月仓储费数据</i></div>
</body></html>
